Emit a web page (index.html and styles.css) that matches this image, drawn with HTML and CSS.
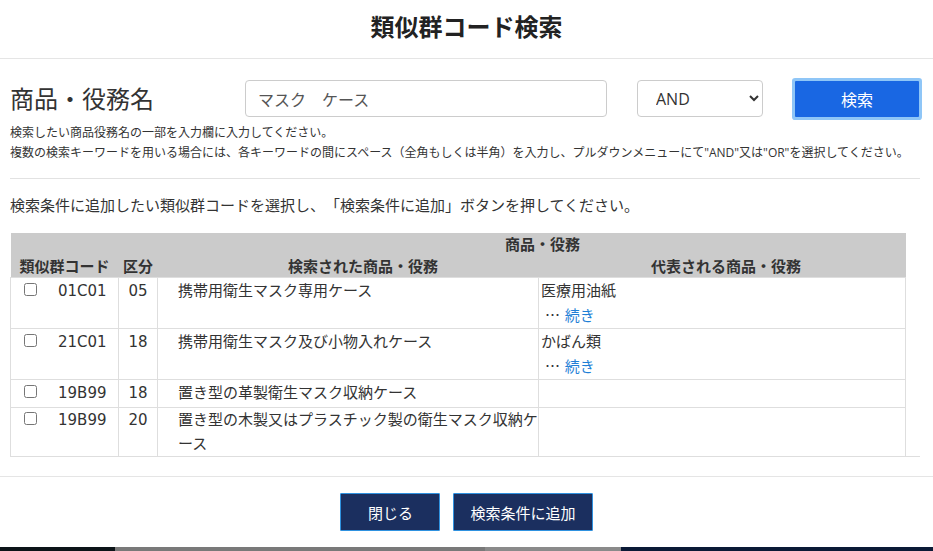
FILE: index.html
```html
<!DOCTYPE html>
<html lang="ja">
<head>
  <meta charset="UTF-8" />
  <meta name="viewport" content="width=device-width, initial-scale=1.0" />
  <title>類似群コード検索</title>
  <link rel="stylesheet" href="styles.css">
</head>
<body>
  <div class="modal">
    <div class="modal-header">
      <h1 class="modal-title">類似群コード検索</h1>
    </div>

    <div class="modal-body">
      <div class="search-row">
        <label class="search-label" for="keyword">商品・役務名</label>
        <input id="keyword" class="keyword" type="text" value="マスク　ケース">
        <select class="mode">
          <option>AND</option>
          <option>OR</option>
        </select>
        <button class="btn-search">検索</button>
      </div>
      <p class="help">
        検索したい商品役務名の一部を入力欄に入力してください。<br>
        複数の検索キーワードを用いる場合には、各キーワードの間にスペース（全角もしくは半角）を入力し、プルダウンメニューにて"AND"又は"OR"を選択してください。
      </p>
      <hr class="divider">
      <p class="guide">検索条件に追加したい類似群コードを選択し、「検索条件に追加」ボタンを押してください。</p>

      <div class="table-wrap">
        <table class="results">
          <colgroup>
            <col class="c-code">
            <col class="c-class">
            <col class="c-found">
            <col class="c-rep">
          </colgroup>
          <thead>
            <tr>
              <th rowspan="2" class="th-bottom">類似群コード</th>
              <th rowspan="2" class="th-bottom">区分</th>
              <th colspan="2" class="th-group">商品・役務</th>
            </tr>
            <tr>
              <th class="th-found">検索された商品・役務</th>
              <th class="th-rep">代表される商品・役務</th>
            </tr>
          </thead>
          <tbody>
            <tr>
              <td class="code"><input type="checkbox"><span>01C01</span></td>
              <td class="cls">05</td>
              <td class="found">携帯用衛生マスク専用ケース</td>
              <td class="rep">医療用油紙<div class="more"><span class="dots">…</span> <a href="#">続き</a></div></td>
            </tr>
            <tr>
              <td class="code"><input type="checkbox"><span>21C01</span></td>
              <td class="cls">18</td>
              <td class="found">携帯用衛生マスク及び小物入れケース</td>
              <td class="rep">かばん類<div class="more"><span class="dots">…</span> <a href="#">続き</a></div></td>
            </tr>
            <tr class="single">
              <td class="code"><input type="checkbox"><span>19B99</span></td>
              <td class="cls">18</td>
              <td class="found">置き型の革製衛生マスク収納ケース</td>
              <td class="rep"></td>
            </tr>
            <tr>
              <td class="code"><input type="checkbox"><span>19B99</span></td>
              <td class="cls">20</td>
              <td class="found">置き型の木製又はプラスチック製の衛生マスク収納ケース</td>
              <td class="rep"></td>
            </tr>
          </tbody>
        </table>
      </div>
    </div>

    <div class="modal-footer">
      <button class="btn-navy btn-close">閉じる</button>
      <button class="btn-navy">検索条件に追加</button>
    </div>
  </div>

  <div class="backdrop">
    <span class="bd-dark"></span>
    <span class="bd-gray"></span>
    <span class="bd-light"></span>
    <span class="bd-navy"></span>
  </div>
</body>
</html>
```

FILE: styles.css
```css
:root {
  --text: #333;
  --line: #dedede;
  --head-bg: #cbcbcb;
  --blue: #1967e3;
  --navy: #1b2f5f;
  --link: #1f7fd6;
}

body {
  margin: 0;
  background: #0b1a36;
  font-family: "Open Sans", "Noto Sans CJK JP", sans-serif;
  color: var(--text);
  text-spacing-trim: space-all;
}

.modal {
  background: #fff;
  width: 933px;
}

.modal-header {
  padding: 14px 0 18px;
  border-bottom: 1px solid #e5e5e5;
  text-align: center;
}

.modal-title {
  margin: 0;
  font-size: 24px;
  line-height: 26px;
  font-weight: bold;
  color: #222;
}

.modal-body {
  padding: 21px 13px 19px 10px;
}

.search-row {
  display: flex;
  align-items: center;
  height: 37px;
}

.search-label {
  width: 235px;
  font-size: 24px;
  line-height: 30px;
}

.keyword {
  box-sizing: border-box;
  width: 362px;
  height: 37px;
  margin: 0 30px 0 0;
  padding: 0 12px;
  border: 1px solid #ccc;
  border-radius: 4px;
  font-family: inherit;
  font-size: 16px;
  color: #555;
}

.mode {
  box-sizing: border-box;
  width: 126px;
  height: 37px;
  margin: 0;
  padding: 0 8px 0 14px;
  border: 1px solid #ccc;
  border-radius: 4px;
  background: #fff;
  font-family: inherit;
  font-size: 16px;
  color: var(--text);
}

.btn-search {
  width: 124px;
  height: 36px;
  margin-left: 32px;
  border: none;
  border-radius: 1px;
  background: var(--blue);
  box-shadow: 0 0 0 3px #8fc6f7;
  color: #fff;
  font-family: inherit;
  font-size: 16px;
}

.help {
  margin: 6px 0 0;
  font-size: 12px;
  line-height: 20px;
}

.divider {
  margin: 15px 0 0;
  border: none;
  border-top: 1px solid #e2e2e2;
}

.guide {
  margin: 15px 0 0;
  font-size: 15px;
  line-height: 22px;
}

.table-wrap {
  margin-top: 17px;
  border-bottom: 1px solid var(--line);
}

.results {
  width: 895px;
  table-layout: fixed;
  border-collapse: collapse;
  font-size: 15px;
}

.c-code  { width: 108px; }
.c-class { width: 39px; }
.c-found { width: 381px; }
.c-rep   { width: 367px; }

.results th {
  height: 22px;
  padding: 0;
  background: var(--head-bg);
  font-weight: bold;
  line-height: 22px;
  text-align: center;
}

.results th.th-bottom { vertical-align: bottom; }
.results th.th-group  { padding-left: 22px; }
.results th.th-found  { padding-left: 30px; }
.results th.th-rep    { padding-left: 8px; }

.results td {
  padding: 1px 0 0;
  border: 1px solid var(--line);
  font-family: "DejaVu Sans", "Noto Sans CJK JP", sans-serif;
  line-height: 24px;
  vertical-align: top;
}

.results tr.single td { padding-bottom: 2px; }

.results tbody tr:last-child td {
  padding-top: 0;
  border-bottom: none;
}

.results td.code { padding-left: 13px; }

.code input {
  width: 13px;
  height: 13px;
  margin: 4px 0 0;
  vertical-align: top;
}

.code span { margin-left: 21px; }

.results td.cls { text-align: center; }

.results td.found { padding-left: 20px; }

.results td.rep { padding-left: 2px; }

.more { padding-left: 4px; }

.dots { font-family: "Noto Sans CJK JP", sans-serif; }

.more a {
  color: var(--link);
  text-decoration: none;
}

.modal-footer {
  display: flex;
  justify-content: center;
  gap: 13px;
  padding: 16px 0;
  border-top: 1px solid #e5e5e5;
}

.btn-navy {
  height: 38px;
  padding: 0 16px;
  border: 1px solid #2f92e0;
  border-radius: 1px;
  background: var(--navy);
  color: #fff;
  font-family: inherit;
  font-size: 15px;
}

.btn-close { min-width: 100px; }

.backdrop {
  display: flex;
  height: 4px;
}

.backdrop span { display: block; }
.bd-dark  { width: 115px; background: #0c1418; }
.bd-gray  { width: 370px; background: #797979; }
.bd-light { width: 136px; background: #8a8a8a; }
.bd-navy  { flex: 1; background: #0b1a36; }
```
